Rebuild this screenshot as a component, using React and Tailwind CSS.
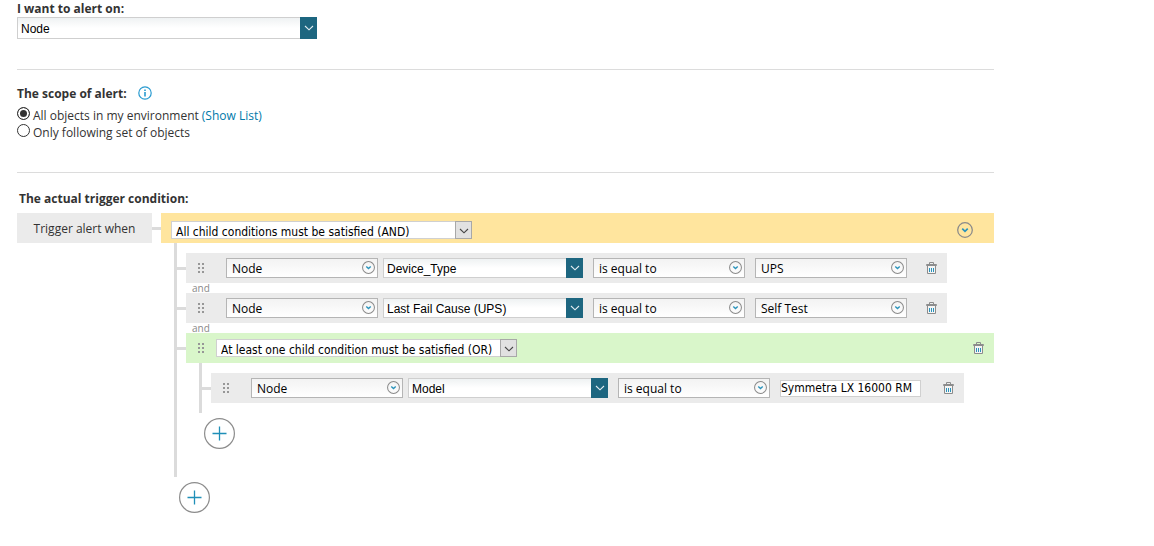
import React from 'react';

const ChevronCircle = ({ className }) => (
  <svg viewBox="0 0 14 14" fill="none" className={className}>
    <circle cx="7" cy="7" r="6.4" stroke="#8a8a8a" strokeWidth="1.1" />
    <path d="M4.6 5.8l2.4 2.3 2.4-2.3" stroke="#2a93bb" strokeWidth="1.5" />
  </svg>
);

const Chevron = ({ className }) => (
  <svg viewBox="0 0 10 6" fill="none" className={className}>
    <path d="M1 1l4 3.8L9 1" stroke="currentColor" strokeWidth="1.1" />
  </svg>
);

const Trash = () => (
  <svg viewBox="0 0 11 12" fill="none" className="w-[11px] h-[12px]">
    <path d="M1.5 3.5h8v8h-8z" fill="#f4f4f4" stroke="#8c8c8c" />
    <path d="M3.5 2V.5h4V2M.5 2.5h10v1H.5z" stroke="#8c8c8c" />
    <path d="M3.5 6v4M5.5 6v4M7.5 6v4" stroke="#2a93bb" />
  </svg>
);

const DragHandle = () => (
  <svg viewBox="0 0 6 10" className="w-[6px] h-[10px]" fill="#979797">
    <path d="M0 0h2v2H0zM4 0h2v2H4zM0 4h2v2H0zM4 4h2v2H4zM0 8h2v2H0zM4 8h2v2H4z" />
  </svg>
);

const DeleteButton = ({ label }) => (
  <button type="button" aria-label={label} className="shrink-0 cursor-pointer">
    <Trash />
  </button>
);

// Grey field with a round arrow
const RoundSelect = ({ label, value }) => (
  <div className="relative w-[152px] shrink-0">
    <select
      aria-label={label}
      defaultValue={value}
      className="block w-full h-5 pl-[5px] pr-5 appearance-none border border-[#b5b5b5] bg-linear-to-b from-[#f3f3f3] to-white font-['Open_Sans',sans-serif] text-[12px] text-black"
    >
      <option>{value}</option>
    </select>
    <ChevronCircle className="absolute right-[3px] top-[3px] w-[13px] h-[13px] pointer-events-none" />
  </div>
);

// Editable field with a teal arrow button
const ComboBox = ({ label, value, className }) => (
  <div className={`flex shrink-0 ${className}`}>
    <input
      type="text"
      aria-label={label}
      defaultValue={value}
      className="flex-1 min-w-0 px-[3px] pt-[2px] border border-r-0 border-[#cfcfcf] bg-linear-to-b from-[#eff2f3] to-white to-50% font-['Liberation_Sans',sans-serif] text-[12px] text-black"
    />
    <button type="button" aria-label={`Open ${label}`} className="flex items-center justify-center w-[17px] bg-[#1d6680] text-[#e4eef2]">
      <Chevron className="w-[10px] h-[6px]" />
    </button>
  </div>
);

const OperatorSelect = ({ value }) => (
  <div className="relative w-[301px] shrink-0">
    <select
      aria-label="Operator"
      defaultValue={value}
      className="block w-full h-[18px] pl-1 pr-5 pt-[2px] appearance-none border border-[#d0d0d0] bg-white font-['DejaVu_Sans_Condensed','DejaVu_Sans',sans-serif] text-[12px] text-black"
    >
      <option>{value}</option>
    </select>
    <span className="absolute right-0 top-0 flex items-center justify-center w-[17px] h-[18px] pt-px border border-[#a8a8a8] bg-[#e1e1e1] text-[#444] pointer-events-none">
      <Chevron className="w-[10px] h-[6px]" />
    </span>
  </div>
);

const Branch = ({ children }) => (
  <div className="flex items-center">
    <div className="w-[9px] h-[3px] bg-[#dbdbdb]" />
    {children}
  </div>
);

const And = () => <div className="ml-[15px] h-[10px] text-[10px] leading-[11px] text-[#8a8a8a]">and</div>;

const Condition = ({ field, children, className }) => (
  <Branch>
    <div className={`flex items-center h-[30px] pl-3 bg-[#ebebeb] ${className}`}>
      <DragHandle />
      <div className="flex items-center ml-[22px]">
        <RoundSelect label="Object type" value="Node" />
        <ComboBox label="Field" value={field} className="w-[200px] h-5 ml-[5px]" />
        <div className="flex items-center gap-[10px] ml-[10px]">
          <RoundSelect label="Comparison" value="is equal to" />
          {children}
        </div>
      </div>
    </div>
  </Branch>
);

const AddButton = () => (
  <button type="button" aria-label="Add condition" className="block ml-[5px] mt-[5px] cursor-pointer">
    <svg viewBox="0 0 31 31" fill="none" className="w-[31px] h-[31px]">
      <circle cx="15.5" cy="15.5" r="14.9" stroke="#8c8c8c" strokeWidth="1.2" />
      <path d="M15.5 8.5v14M8.5 15.5h14" stroke="#1f8fb8" strokeWidth="1.3" />
    </svg>
  </button>
);

const Scope = ({ id, children, ...props }) => (
  <div className="flex items-center gap-[3px] h-[17px]">
    <input
      type="radio"
      name="scope"
      id={id}
      className="w-[13px] h-[13px] mb-1 appearance-none rounded-full border border-[#333] bg-white checked:bg-[#333] checked:shadow-[inset_0_0_0_2px_#fff]"
      {...props}
    />
    {children}
  </div>
);

const App = () => {
  return (
    <main className="pl-[17px] pr-40 font-['Open_Sans',sans-serif] text-[12px] leading-[17px] text-[#333]">
      <section className="pb-[30px] border-b border-[#dcdcdc]">
        <h2 className="font-bold">I want to alert on:</h2>
        <ComboBox label="Alert on" value="Node" className="w-[300px] h-[22px]" />
      </section>

      <section className="pt-[15px] pb-[31px] border-b border-[#dcdcdc]">
        <div className="flex items-center gap-[11px] mb-[5px]">
          <h2 className="font-bold">The scope of alert:</h2>
          <button type="button" aria-label="About the scope" className="mb-px">
            <svg viewBox="0 0 14 14" fill="none" className="w-[14px] h-[14px]">
              <circle cx="7" cy="7" r="6.2" stroke="#2a9bd0" strokeWidth="1.2" />
              <path d="M7 3.5v1.4M7 6v4.5" stroke="#2a9bd0" strokeWidth="1.6" />
            </svg>
          </button>
        </div>
        <Scope id="scope-all" defaultChecked>
          <label htmlFor="scope-all">All objects in my environment</label>
          <a href="#list" className="text-[#0079aa]">(Show List)</a>
        </Scope>
        <Scope id="scope-set">
          <label htmlFor="scope-set">Only following set of objects</label>
        </Scope>
      </section>

      <section className="pt-[17px]">
        <h2 className="ml-[2px] mb-[6px] font-bold">The actual trigger condition:</h2>
        <div className="flex items-center">
          <div className="flex items-center justify-center w-[135px] h-[30px] bg-[#ebebeb]">Trigger alert when</div>
          <div className="w-[9px] h-[3px] bg-[#dbdbdb]" />
          <div className="flex flex-1 items-center justify-between h-[30px] pl-[10px] pr-[21px] pt-1 bg-[#ffe59e]">
            <OperatorSelect value="All child conditions must be satisfied (AND)" />
            <button type="button" aria-label="Expand" className="mb-px cursor-pointer">
              <ChevronCircle className="w-4 h-4" />
            </button>
          </div>
        </div>

        <div className="ml-[157px]">
          <div className="border-l-[3px] border-[#dbdbdb] pt-[10px] pb-7">
            <Condition field="Device_Type" className="w-[761px]">
              <RoundSelect label="Value" value="UPS" />
              <span className="flex ml-[9px]"><DeleteButton label="Delete condition" /></span>
            </Condition>
            <And />
            <Condition field="Last Fail Cause (UPS)" className="w-[761px]">
              <RoundSelect label="Value" value="Self Test" />
              <span className="flex ml-[9px]"><DeleteButton label="Delete condition" /></span>
            </Condition>
            <And />
            <Branch>
              <div className="flex flex-1 items-center h-[30px] pl-3 pr-[10px] bg-[#d9f6ca]">
                <DragHandle />
                <div className="flex-1 ml-3">
                  <OperatorSelect value="At least one child condition must be satisfied (OR)" />
                </div>
                <DeleteButton label="Delete group" />
              </div>
            </Branch>

            <div className="ml-[22px]">
              <div className="border-l-[3px] border-[#dbdbdb] py-[10px]">
                <Condition field="Model" className="w-[753px]">
                  <input
                    type="text"
                    aria-label="Value"
                    defaultValue="Symmetra LX 16000 RM"
                    className="w-[141px] h-[17px] pt-px border border-[#d0d0d0] bg-white font-['DejaVu_Sans_Condensed','DejaVu_Sans',sans-serif] text-[12px] text-black"
                  />
                  <span className="flex ml-3"><DeleteButton label="Delete condition" /></span>
                </Condition>
              </div>
              <AddButton />
            </div>
          </div>
          <AddButton />
        </div>
      </section>
    </main>
  );
};

export default App;
